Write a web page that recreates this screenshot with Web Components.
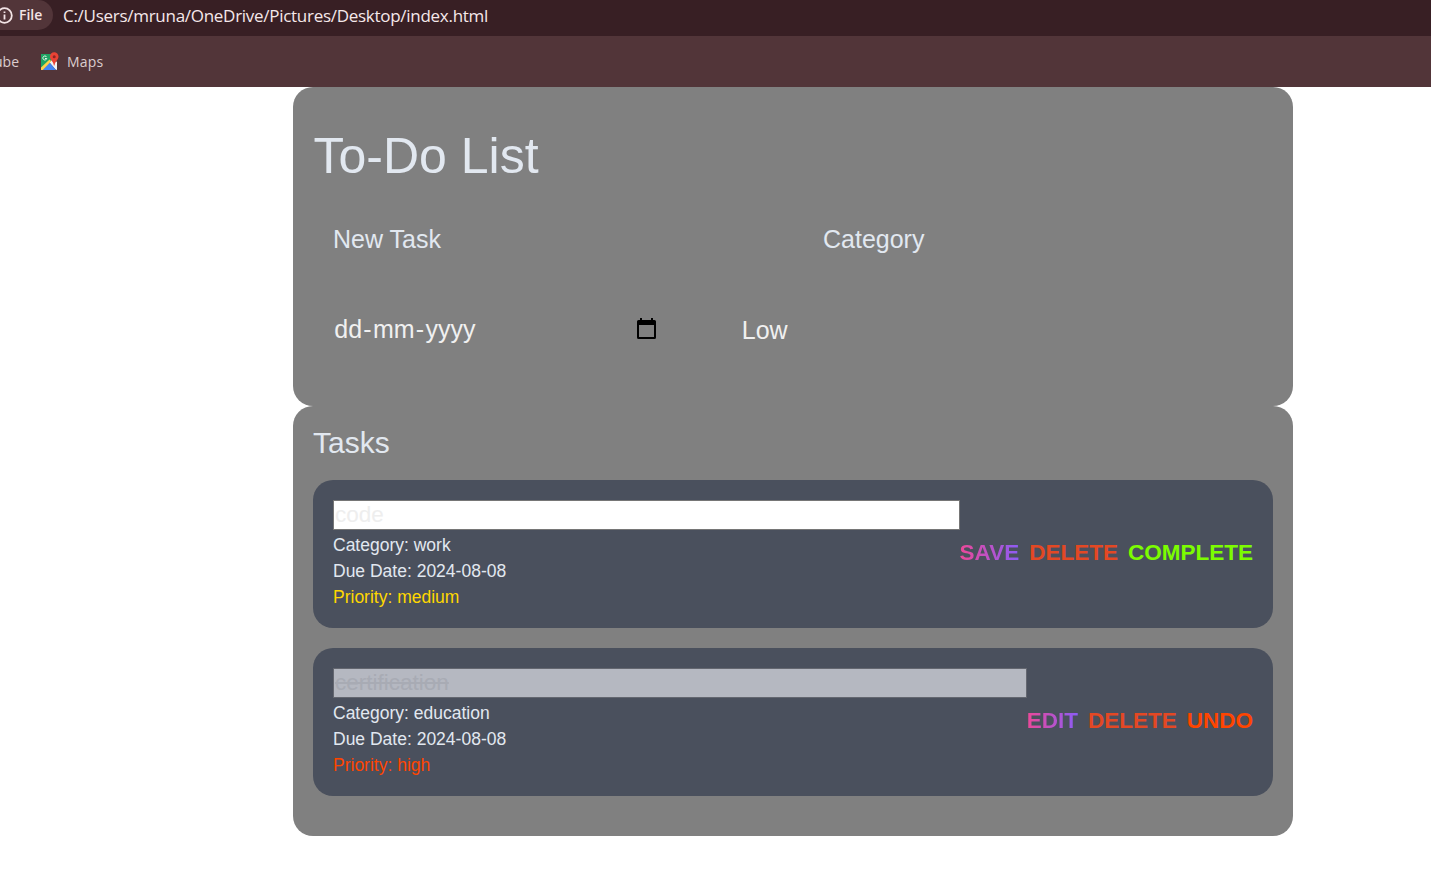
<!DOCTYPE html>
<html lang="en">
<head>
<meta charset="utf-8">
<title>To-Do List</title>
<style>
body{margin:0;background:#fff;font-family:"Liberation Sans",Arial,sans-serif;color:#e2e8f0;overflow:hidden}
</style>
</head>
<body>
<browser-bar></browser-bar>
<todo-app></todo-app>
<script>
const define = (name, html) => customElements.define(name, class extends HTMLElement {
  constructor() {
    super();
    this.attachShadow({mode: 'open'}).innerHTML = html;
  }
});

define('browser-bar', `<style>
:host{display:block;width:100%;height:87px;overflow:hidden;font-family:"Open Sans","Noto Sans",sans-serif;white-space:nowrap}
.address{height:36px;background:#381f24;display:flex;align-items:flex-start;overflow:hidden}
.chip{height:30px;width:53px;box-sizing:border-box;background:#523539;border-radius:0 15px 15px 0;display:flex;align-items:center;color:#f3e4e6;font-weight:600;font-size:14px}
.chip svg{margin-left:-4px;margin-right:6px;flex:none}
.chip span{line-height:30px;height:30px}
.url{margin-left:10px;line-height:31px;font-size:17px;color:#f5e8ea;letter-spacing:-.28px}
.marks{height:51px;background:#523539;display:flex;align-items:center;color:#dccdcf;font-size:14px;overflow:hidden}
.marks svg{margin:0 8px 0 21px;flex:none}
.marks span:last-child{letter-spacing:.2px}
.yt{width:19px;display:flex;justify-content:flex-end}
</style>
<div class="address"><div class="chip"><svg width="17" height="17" viewBox="0 0 17 17" fill="none" stroke="#f3e4e6" stroke-width="1.8"><circle cx="8.5" cy="8.5" r="7.3"/><path d="M8.5 7.5v5M8.5 4.4v1.7"/></svg><span>File</span></div><span class="url">C:/Users/mruna/OneDrive/Pictures/Desktop/index.html</span></div>
<div class="marks"><span class="yt">ube</span><svg width="19" height="19" viewBox="0 0 19 19"><path fill="#1fa463" d="M1 2h12v6L1 18z"/><path fill="#f2f2f2" d="M9.5 10.5l3.5-3.500 4 3v8l-1.500-.5z"/><path fill="#4285f4" d="M2.500 18l7-7.500L16 18z"/><path fill="#ffd04b" d="M1 18v-2.500L9.500 7.500l1.700 1.800L2.800 18z"/><path d="M6.600 5A2 2 0 1 0 6.800 6.500H5" fill="none" stroke="#e9f5ed"/><path fill="#e94335" d="M14.200.3a4.300 4.300 0 0 1 4.300 4.300c0 3.200-3.200 4.500-4 8.800h-.6c-.8-4.300-4-5.600-4-8.800A4.300 4.300 0 0 1 14.200.3z"/><circle cx="14.200" cy="4.700" r="1.500" fill="#8b2525"/></svg><span>Maps</span></div>`);

define('panel-card', `<style>
:host{display:block;box-sizing:border-box;width:1000px;background:#808080;border-radius:20px;padding:0 20px}
</style><slot></slot>`);

define('date-field', `<style>
:host{display:flex;align-items:flex-start;justify-content:space-between;width:323px;height:30px;color:#f0f0f0}
.v{display:flex;line-height:28px}
.v b{font-weight:400;padding:0 1.25px}
svg{margin-top:3px}
</style><span class="v"><b>dd</b>-<b>mm</b>-<b>yyyy</b></span><svg width="19" height="21" viewBox="0 0 19 21"><path fill="#000" fill-rule="evenodd" d="M3 0h2v2h9V0h2v2h1.500Q19 2 19 3.500V19.500Q19 21 17.500 21H1.500Q0 21 0 19.500V3.500Q0 2 1.500 2H3zM2 7v12h15V7z"/></svg>`);

define('todo-form', `<style>
:host{display:block;height:319px;overflow:hidden}
h1{font-size:50px;line-height:58px;font-weight:400;margin:40px 0 0 .5px}
.row{display:flex;font-size:25px;line-height:30px;padding-left:20px}
.names{margin-top:39px}
.names span:first-child{width:490px}
.opts{margin-top:61px;color:#f0f0f0}
.opts span{margin-left:85.75px}
</style><h1>To-Do List</h1>
<div class="row names"><span>New Task</span><span>Category</span></div>
<div class="row opts"><date-field></date-field><span>Low</span></div>`);

customElements.define('task-item', class extends HTMLElement {
  connectedCallback() {
    const done = this.hasAttribute('done');
    const p = this.getAttribute('priority');
    this.attachShadow({mode: 'open'}).innerHTML = `<style>
:host{display:flex;align-items:center;box-sizing:border-box;height:148px;padding:20px;background:#4a505d;border-radius:20px;margin-bottom:20px}
.info{flex:1;font-size:17.5px;line-height:26px;height:108px}
.name{box-sizing:border-box;height:30px;margin:0 0 2px;padding-left:1px;background:#fff;border:1px solid #767676;color:#eee;font-size:22.5px;line-height:28px}
.done{background:#b5b8c1;border-color:#646770;text-decoration:line-through;color:#a8abb4}
.medium{color:#ffd700}.high{color:#ff4500}
.actions{display:flex;gap:10px;font-weight:700;font-size:22.5px;line-height:26px;margin-top:-2px}
.edit{background:linear-gradient(to right,#ec4899,#8b5cf6);-webkit-background-clip:text;background-clip:text;color:transparent}
.del{color:#e34824}.complete{color:#7cfc00}.undo{color:#ff4500}
</style>
<div class="info"><div class="name ${done ? 'done' : ''}">${this.getAttribute('name')}</div>
<div>Category: ${this.getAttribute('category')}</div><div>Due Date: 2024-08-08</div><div class="${p}">Priority: ${p}</div></div>
<div class="actions"><span class="edit">${done ? 'EDIT' : 'SAVE'}</span><span class="del">DELETE</span><span class="${done ? 'undo' : 'complete'}">${done ? 'UNDO' : 'COMPLETE'}</span></div>`;
  }
});

define('task-list', `<style>
:host{display:block;height:430px;overflow:hidden}
h2{font-size:30px;line-height:34px;font-weight:400;margin:20px 0}
</style><h2>Tasks</h2>
<task-item name="code" category="work" priority="medium"></task-item>
<task-item name="certification" category="education" priority="high" done></task-item>`);

define('todo-app', `<style>
:host{display:block;margin-left:293px;width:1000px}
</style><panel-card><todo-form></todo-form></panel-card><panel-card><task-list></task-list></panel-card>`);
</script>
</body>
</html>
